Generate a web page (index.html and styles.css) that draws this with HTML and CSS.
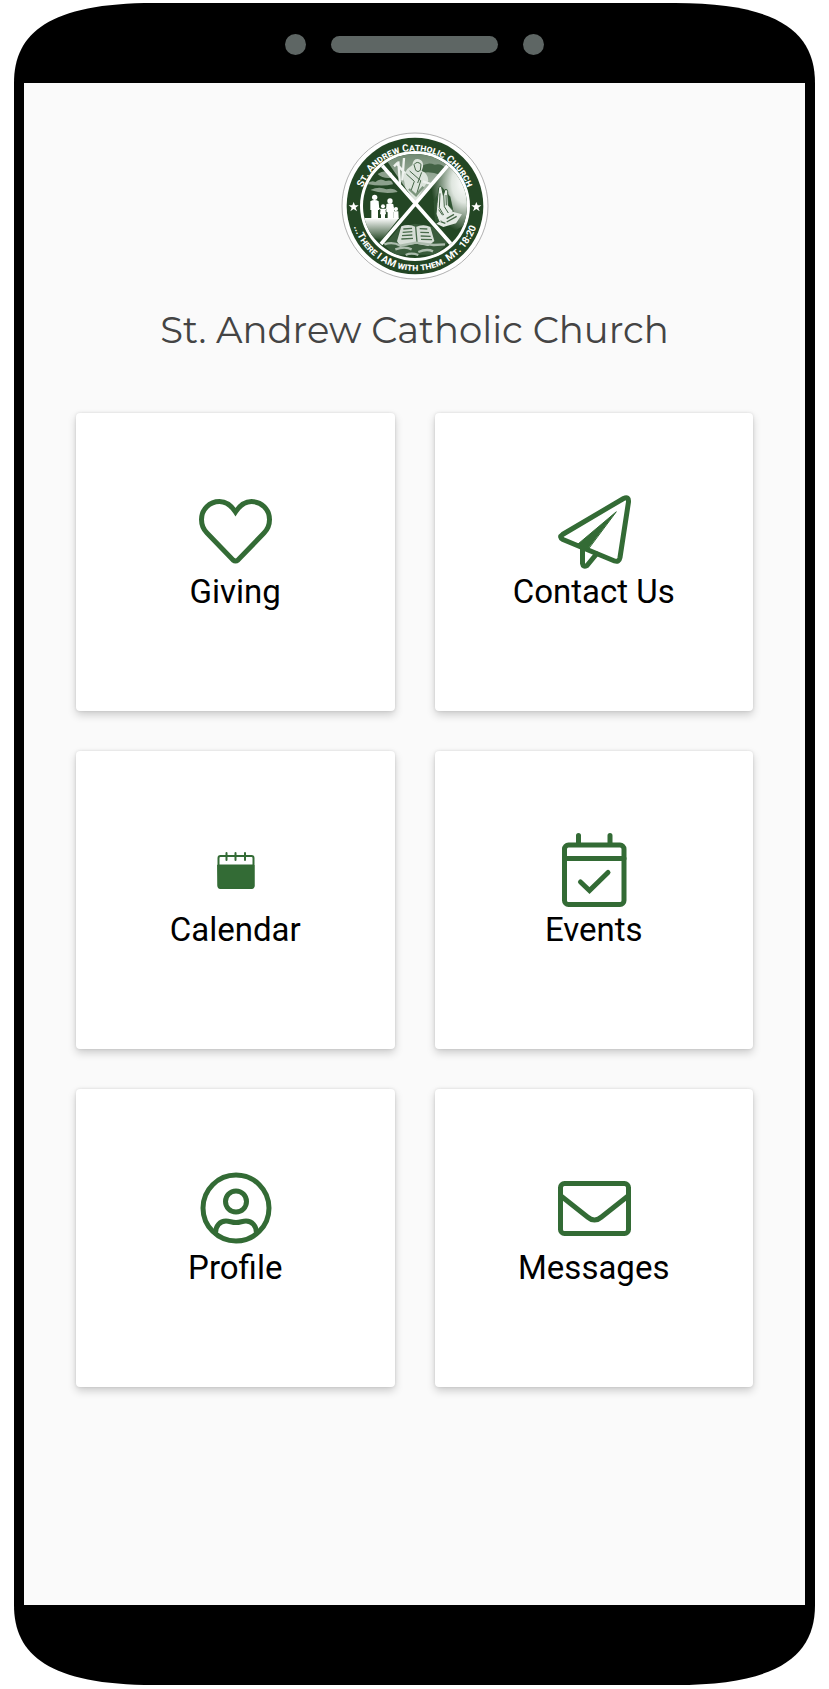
FILE: index.html
```html
<!DOCTYPE html>
<html lang="en">
<head>
    <meta charset="UTF-8">
    <meta name="viewport" content="width=device-width, initial-scale=1.0">
    <title>St. Andrew Catholic Church</title>
    <link rel="stylesheet" href="styles.css">
</head>
<body>
    <div class="phone">
        <div class="bezel">
            <svg class="corner" viewBox="0 0 140 80" aria-hidden="true"><path d="M0 80C0 30 35 0 140 0V80Z"/></svg>
            <div class="bezel-middle">
                <span class="sensor"></span>
                <span class="speaker"></span>
                <span class="sensor"></span>
            </div>
            <svg class="corner flip-x" viewBox="0 0 140 80" aria-hidden="true"><path d="M0 80C0 30 35 0 140 0V80Z"/></svg>
        </div>

        <main class="screen">
            <header class="church">
                <svg class="logo" viewBox="30 34 444 444" role="img" aria-label="St. Andrew Catholic Church seal">
                    <defs>
                        <path id="arc-top" d="M86 256A166 166 0 0 1 418 256"/>
                        <path id="arc-bottom" d="M58 256A194 194 0 0 0 446 256"/>
                        <clipPath id="seal"><circle cx="252" cy="256" r="156"/></clipPath>
                        <linearGradient id="mist" x1="0" y1="0" x2="0" y2="1">
                            <stop offset="0" stop-color="#fff"/>
                            <stop offset="1" stop-color="#234624"/>
                        </linearGradient>
                        <linearGradient id="sky" x1="0" y1="0" x2="0" y2="1">
                            <stop offset="0" stop-color="#6f8870"/>
                            <stop offset="1" stop-color="#c3cec3"/>
                        </linearGradient>
                        <radialGradient id="glow" cx="0.85" cy="0.25" r="0.7">
                            <stop offset="0" stop-color="#fff"/>
                            <stop offset="0.4" stop-color="#dfe6df"/>
                            <stop offset="1" stop-color="#234624"/>
                        </radialGradient>
                    </defs>
                    <circle class="seal-edge" cx="252" cy="256" r="219"/>
                    <circle cx="252" cy="256" r="205" fill="#234624"/>
                    <circle cx="252" cy="256" r="165" fill="#fff"/>
                    <g clip-path="url(#seal)">
                        <rect x="90" y="90" width="330" height="330" fill="#234624"/>

                        <!-- saint and clouds -->
                        <path d="M150 95H350V135L255 248Z" fill="url(#sky)"/>
                        <path d="M108 190q12-12 25-6q14-14 31-3q20-6 22 10q-34 8-78-1zM118 208q26-12 48-2q23-6 34 8q-42 8-82-6zM140 160q20-15 43-3v14q-28 4-43-11z" fill="#8ca08c"/>
                        <path d="M268 139q22-17 43-7q20-6 32 11l-17 19q-25-12-58-5z" fill="#436345"/>
                        <path d="M244 133q3-21 20-17q14 4 12 22l-4 13q19 6 20 29l-17 25l-20 37l-31-39l-8-38l13-20z" fill="#dce4dc"/>
                        <path d="M249 132q9-13 21-1l-2 18q-7 8-14 0zM226 160l24 22l-10 28M236 151l33 29l-12 40M272 155l-12 32" fill="none" stroke="#456647" stroke-width="3"/>
                        <path d="M202 122l5 68M219 112l-5 67M222 158l-25-29l-8 8M275 182l25 8" fill="none" stroke="#eef2ee" stroke-width="7"/>
                        <path d="M234 205l21 19l22-26" fill="none" stroke="#7c957d" stroke-width="7"/>

                        <!-- family -->
                        <path d="M92 292H204L150 360Q105 349 92 292Z" fill="url(#mist)"/>
                        <g fill="#fff">
                            <circle cx="131" cy="230" r="8"/>
                            <path d="M118 242q13-8 25 0l2 26h-4v26h-20v-26h-3z"/>
                            <circle cx="177" cy="241" r="8"/>
                            <path d="M166 251q11-7 21 0l3 23h-3v20h-17v-19l-4-2z"/>
                            <circle cx="156" cy="257" r="6"/>
                            <path d="M149 264h14l2 17h-3v13h-12v-13h-3z"/>
                            <circle cx="195" cy="265" r="6"/>
                            <path d="M187 272h15l1 22h-16z"/>
                            <path d="M140 258l13 12M162 268l10-12M187 260l8 12" stroke="#fff" stroke-width="3"/>
                        </g>

                        <!-- praying hands -->
                        <path d="M350 135L278 232L345 345L425 300V140Z" fill="url(#glow)"/>
                        <path d="M308 242L332 198L358 228L366 265L347 303L312 305Z" fill="#315533"/>
                        <path d="M318 249l5-48q5-9 9 0l5 23l5-17q7-4 8 6l2 41l15 17l-14 24l-29 8l-9-23z" fill="#e8ede8" stroke="#345736" stroke-width="3"/>
                        <path d="M327 218l-2 43l13 22M338 222l2 36l12 19M345 223l1 31M323 267l12 17" fill="none" stroke="#426344" stroke-width="3"/>
                        <path d="M342 292l23-19l28 8l-18 27l-38 11l-21-10z" fill="#e3e9e3"/>
                        <path d="M347 294l22-13M347 304l30-17M329 303l14 5" stroke="#456747" stroke-width="4"/>

                        <!-- open book on the rocks -->
                        <path d="M160 372L204 321L252 309L305 318L350 367L315 402H190Z" fill="#395b3b"/>
                        <path d="M211 317q24-9 43 2q24-11 44 0l12 42l-18 15l-36-7l-48 8l-10-15z" fill="#d6ded6"/>
                        <path d="M254 319l4 45M217 325l26-2M215 335l29-2M213 345l31-2M211 355l35-2M266 324l23 1M268 335l26 1M269 346l30 1M270 356l33 1" stroke="#496b4b" stroke-width="4"/>
                        <path d="M160 371q26-9 48 4l46-9l54 7l34-2M193 386q29-10 49 0M262 394q26-11 44-2M224 403q17-8 38 0" fill="none" stroke="#acbcad" stroke-width="7"/>
                        <path d="M150 131L365 375M350 135L150 370" stroke="#fff" stroke-width="11"/>
                    </g>
                    <path d="M68 244l4 10h11l-9 7l4 11l-10-7l-10 7l4-11l-9-7h11zM436 244l4 10h11l-9 7l4 11l-10-7l-10 7l4-11l-9-7h11z" fill="#fff"/>
                    <text class="seal-text"><textPath href="#arc-top" startOffset="50%">St. Andrew Catholic Church</textPath></text>
                    <text class="seal-text"><textPath href="#arc-bottom" startOffset="50%">...There I AM with them. Mt. 18:20</textPath></text>
                </svg>
                <h1>St. Andrew Catholic Church</h1>
            </header>

            <nav class="menu" aria-label="Main menu">
                <a class="card" href="#giving">
                    <svg class="icon" viewBox="0 0 80 80" aria-hidden="true">
                        <path d="M40.5 21C36 14 30.5 10.5 24.5 10.5C14.5 10.5 6.5 18.5 6.5 28.5C6.5 34 8.5 38.5 12 42L38 69Q40.5 71 43 69L69 42C72.5 38.5 74.5 34 74.5 28.5C74.5 18.5 66.5 10.5 56.5 10.5C50.5 10.5 45 14 40.5 21Z"/>
                    </svg>
                    <span>Giving</span>
                </a>
                <a class="card" href="#contact">
                    <svg class="icon" viewBox="0 0 80 80" aria-hidden="true">
                        <path d="M8.5 43.5L69.5 7.5Q75 5 74.5 11L66 66.5Q65 71.5 60.5 70L9 48.5Q4.5 46 8.5 43.5Z"/>
                        <path d="M28.5 56V72.5Q29 76.5 33 74.5L42.5 63"/>
                        <path class="solid" d="M62 21L24 53L34 58Z"/>
                    </svg>
                    <span>Contact Us</span>
                </a>
                <a class="card" href="#calendar">
                    <svg class="icon thin" viewBox="0 0 80 80" aria-hidden="true">
                        <rect x="23.5" y="27" width="35" height="32" rx="2"/>
                        <path d="M31.5 24V31M40.5 24V31M50 24V31"/>
                        <path class="solid" d="M23 36H59V57Q59 59 57 59H25Q23 59 23 57Z"/>
                    </svg>
                    <span>Calendar</span>
                </a>
                <a class="card" href="#events">
                    <svg class="icon" viewBox="0 0 80 80" aria-hidden="true">
                        <rect x="10.5" y="16" width="59.5" height="59.5" rx="4"/>
                        <path d="M24.5 14V6.5M56 14V6.5M10.5 29.5H70"/>
                        <path d="M26.5 53L35.5 61.5L54 43.5"/>
                    </svg>
                    <span>Events</span>
                </a>
                <a class="card" href="#profile">
                    <svg class="icon" viewBox="0 0 80 80" aria-hidden="true">
                        <circle cx="41" cy="41" r="33"/>
                        <circle cx="41" cy="34.5" r="10.5"/>
                        <path d="M20.5 66C20.5 59 25 54 31 54C35 54 36.5 55.5 41 55.5C45.5 55.5 47 54 51 54C57 54 61.5 59 61.5 66"/>
                    </svg>
                    <span>Profile</span>
                </a>
                <a class="card" href="#messages">
                    <svg class="icon" viewBox="0 0 80 80" aria-hidden="true">
                        <rect x="6.5" y="16.5" width="68" height="50" rx="4"/>
                        <path d="M7 29L33.5 50Q40.5 56 47.5 50L74 29"/>
                    </svg>
                    <span>Messages</span>
                </a>
            </nav>
        </main>

        <div class="bezel">
            <svg class="corner flip-y" viewBox="0 0 140 80" aria-hidden="true"><path d="M0 80C0 30 35 0 140 0V80Z"/></svg>
            <div class="bezel-middle"></div>
            <svg class="corner flip-x flip-y" viewBox="0 0 140 80" aria-hidden="true"><path d="M0 80C0 30 35 0 140 0V80Z"/></svg>
        </div>
    </div>
</body>
</html>
```
FILE: styles.css
```css
* {
    box-sizing: border-box;
}

body {
    margin: 0;
    background: #fff;
    color: #000;
    font-family: Roboto, sans-serif;
}

.phone {
    display: flex;
    flex-direction: column;
    min-height: 100vh;
    padding: 3px 14px 4px;
}

/* Phone frame */
.bezel {
    display: flex;
    height: 80px;
}

.bezel-middle {
    flex: 1;
    display: flex;
    align-items: center;
    justify-content: center;
    gap: 25px;
    padding-top: 3px;
    background: #000;
}

.corner {
    display: block;
    width: 140px;
    height: 80px;
}

.flip-x {
    transform: scaleX(-1);
}

.flip-y {
    transform: scaleY(-1);
}

.flip-x.flip-y {
    transform: scale(-1, -1);
}

.sensor {
    width: 21px;
    height: 21px;
    border-radius: 50%;
    background: #5e6664;
}

.speaker {
    width: 167px;
    height: 17px;
    border-radius: 9px;
    background: #5e6664;
}

.screen {
    flex: 1;
    padding: 49px 52px;
    border: solid #000;
    border-width: 0 10px;
    background: #fafafa;
}

/* Church heading */
.church {
    display: flex;
    flex-direction: column;
    align-items: center;
    gap: 26px;
    margin-bottom: 59px;
}

.logo {
    width: 148px;
    height: 148px;
}

.seal-edge {
    fill: #fff;
    stroke: #8a8a8a;
    stroke-width: 2;
}

.seal-text {
    fill: #fff;
    font-size: 30px;
    font-weight: 700;
    font-variant: small-caps;
    text-anchor: middle;
}

h1 {
    margin: 0;
    color: #444;
    font-family: Montserrat, Inter, sans-serif;
    font-size: 37px;
    font-weight: 400;
    line-height: 48px;
    text-align: center;
}

/* Menu cards */
.menu {
    display: grid;
    grid-template-columns: 1fr 1fr;
    gap: 40px;
}

.card {
    display: flex;
    flex-direction: column;
    align-items: center;
    padding: 78px 0 98px;
    border-radius: 4px;
    background: #fff;
    box-shadow: 0 4px 9px rgba(0,0,0,0.18), 0 0 3px rgba(0,0,0,0.12);
    color: #000;
    font-size: 33px;
    line-height: 42px;
    text-decoration: none;
}

.icon {
    width: 80px;
    height: 80px;
    fill: none;
    stroke: #336b35;
    stroke-width: 5;
    stroke-linecap: round;
}

.icon.thin {
    stroke-width: 2;
}

.icon .solid {
    fill: #336b35;
    stroke-width: 1;
}
```
